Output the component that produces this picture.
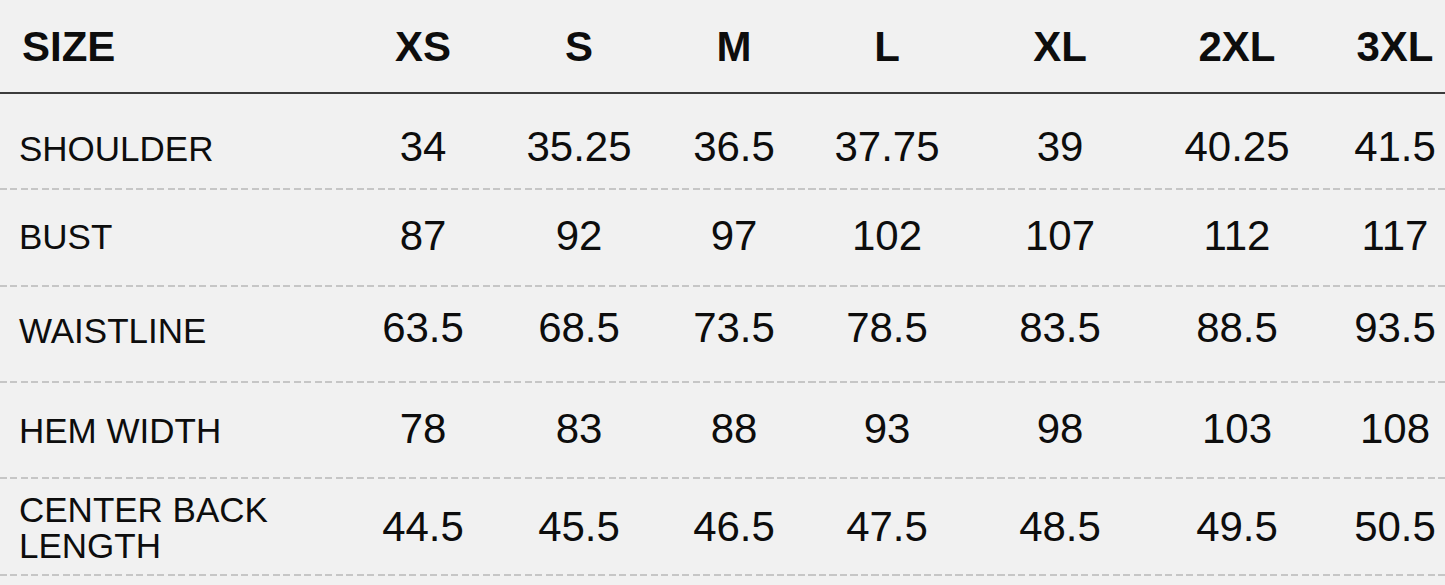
const sizes = ["XS", "S", "M", "L", "XL", "2XL", "3XL"]

const rows = [
  {
    label: "SHOULDER",
    values: ["34", "35.25", "36.5", "37.75", "39", "40.25", "41.5"],
    row: "h-[94px] pt-[12px]",
    shift: "pt-[4px]",
  },
  {
    label: "BUST",
    values: ["87", "92", "97", "102", "107", "112", "117"],
    row: "h-[95px] pb-[4px]",
    shift: "pt-[2px]",
  },
  {
    label: "WAISTLINE",
    values: ["63.5", "68.5", "73.5", "78.5", "83.5", "88.5", "93.5"],
    row: "h-[94px] pb-[12px]",
    shift: "pt-[6px]",
  },
  {
    label: "HEM WIDTH",
    values: ["78", "83", "88", "93", "98", "103", "108"],
    row: "h-[94px] pb-[2px]",
    shift: "pt-[4px]",
  },
  {
    label: (
      <>
        CENTER BACK
        <br />
        LENGTH
      </>
    ),
    values: ["44.5", "45.5", "46.5", "47.5", "48.5", "49.5", "50.5"],
    row: "h-[95px]",
    shift: "pt-[2px]",
  },
]

const cols = "grid grid-cols-[345px_156px_156px_154px_152px_194px_160px_128px]"

function Dashed() {
  return (
    <div className="h-[2px] w-full bg-[repeating-linear-gradient(to_right,#c6c6c6_0_7px,transparent_7px_10.5px)]" />
  )
}

export default function App() {
  return (
    <div className="w-[1445px] h-[585px] overflow-hidden bg-[#f1f1f1] text-[#0d0d0d] font-['Liberation_Sans',Arial,sans-serif]">
      <div className={`${cols} h-[92px] items-center pt-[2px]`}>
        <div className="pl-[22px] text-[42px] font-bold leading-none">SIZE</div>
        {sizes.map((s, i) => (
          <div
            key={s}
            className={`text-center text-[42px] font-bold leading-none ${i === 6 ? "pl-[28px]" : ""}`}
          >
            {s}
          </div>
        ))}
      </div>
      <div className="h-[2px] bg-[#3c3c3c]" />

      {rows.map((r, idx) => (
        <div key={idx}>
          <div className={`${cols} items-center ${r.row}`}>
            <div className={`pl-[19px] text-[35px] leading-[36px] ${r.shift}`}>{r.label}</div>
            {r.values.map((v, i) => (
              <div
                key={i}
                className={`text-center text-[42px] leading-none ${i === 6 ? "pl-[28px]" : ""}`}
              >
                {v}
              </div>
            ))}
          </div>
          <Dashed />
        </div>
      ))}
    </div>
  )
}
